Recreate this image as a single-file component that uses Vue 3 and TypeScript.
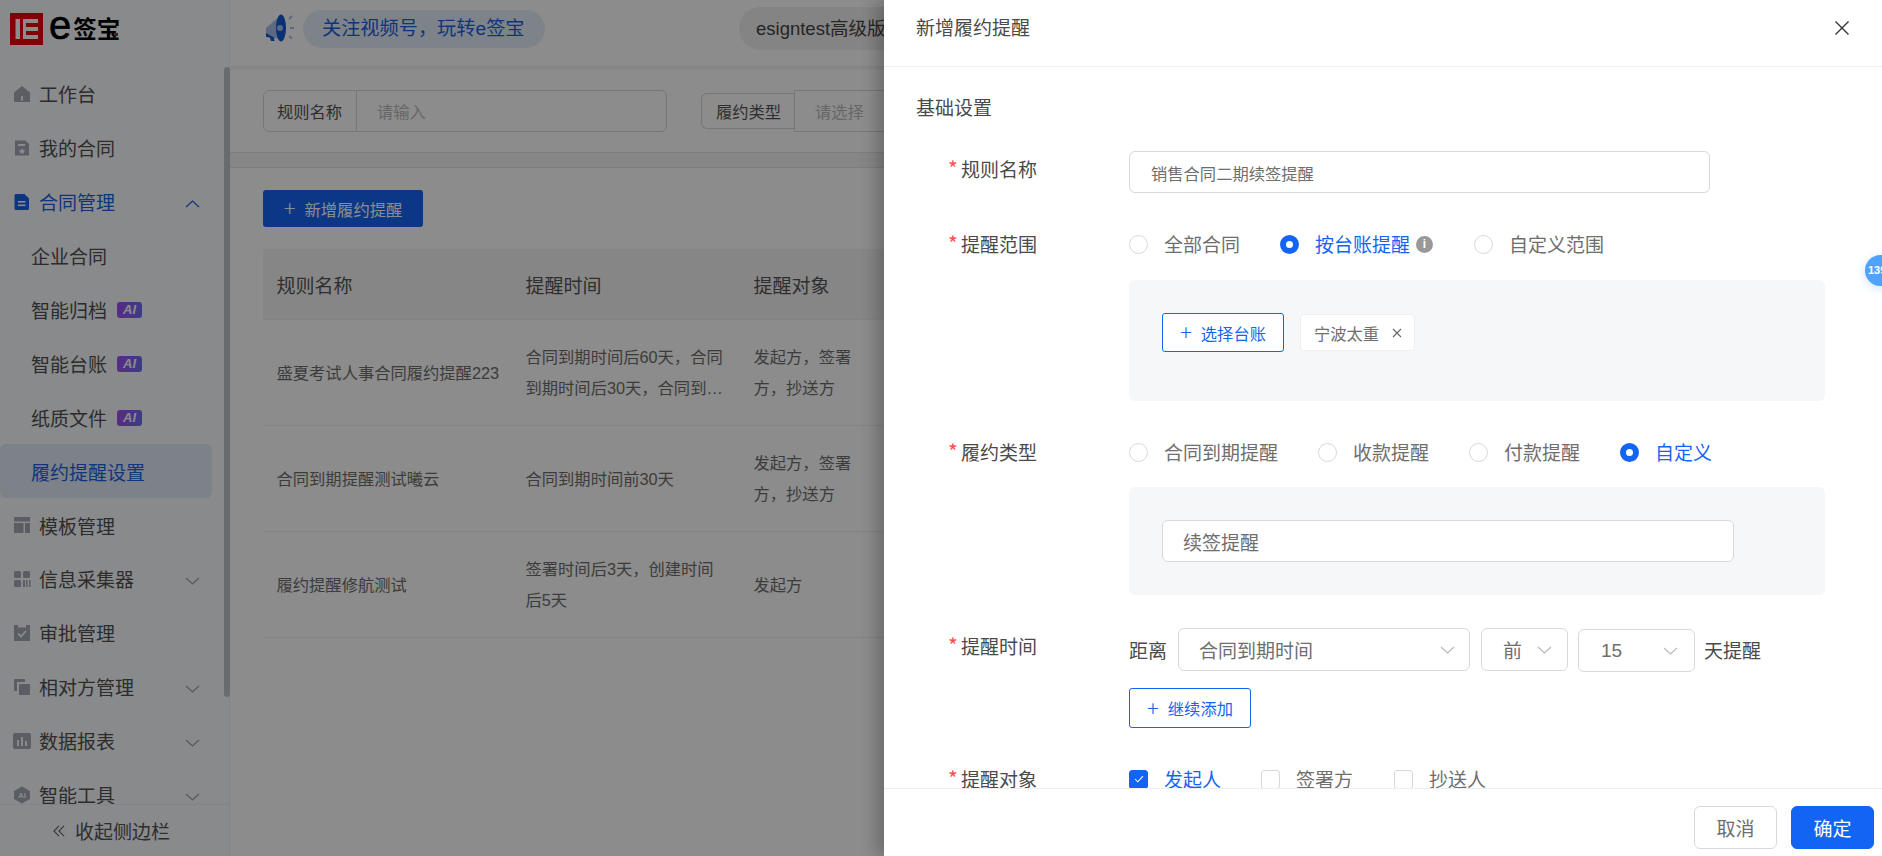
<script setup lang="ts">
interface NavItem {
  label: string
  icon?: string
  arrow?: 'up' | 'down'
  ai?: boolean
  sub?: boolean
  open?: boolean
  active?: boolean
}
const nav: NavItem[] = [
  { label: '工作台', icon: 'home' },
  { label: '我的合同', icon: 'mine' },
  { label: '合同管理', icon: 'doc', arrow: 'up', open: true },
  { label: '企业合同', sub: true },
  { label: '智能归档', sub: true, ai: true },
  { label: '智能台账', sub: true, ai: true },
  { label: '纸质文件', sub: true, ai: true },
  { label: '履约提醒设置', sub: true, active: true },
  { label: '模板管理', icon: 'tpl' },
  { label: '信息采集器', icon: 'grid', arrow: 'down' },
  { label: '审批管理', icon: 'check', },
  { label: '相对方管理', icon: 'copy', arrow: 'down' },
  { label: '数据报表', icon: 'chart', arrow: 'down' },
  { label: '智能工具', icon: 'ai', arrow: 'down' }
]
const rows = [
  { name: '盛夏考试人事合同履约提醒223', time: '合同到期时间后60天，合同到期时间后30天，合同到期时间后15天', target: '发起方，签署方，抄送方' },
  { name: '合同到期提醒测试曦云', time: '合同到期时间前30天', target: '发起方，签署方，抄送方' },
  { name: '履约提醒修航测试', time: '签署时间后3天，创建时间后5天', target: '发起方' }
]
const scopes = [
  { label: '全部合同', on: false },
  { label: '按台账提醒', on: true, info: true },
  { label: '自定义范围', on: false }
]
const kinds = [
  { label: '合同到期提醒', on: false },
  { label: '收款提醒', on: false },
  { label: '付款提醒', on: false },
  { label: '自定义', on: true }
]
const targets = [
  { label: '发起人', on: true },
  { label: '签署方', on: false },
  { label: '抄送人', on: false }
]
</script>

<template>
  <div class="page">
    <aside class="side">
      <div class="logo">
        <svg class="logo-mark" viewBox="0 0 33 32" width="33" height="32">
          <rect width="33" height="32" fill="#f00008" />
          <rect x="5.5" y="6" width="4.5" height="20" fill="#fff" />
          <rect x="13" y="6" width="3" height="20" fill="#fff" />
          <rect x="13" y="6" width="15" height="4" fill="#fff" />
          <rect x="13" y="14" width="15" height="4" fill="#fff" />
          <rect x="13" y="22" width="15" height="4" fill="#fff" />
        </svg>
        <span class="logo-e">e</span><span class="logo-cn">签宝</span>
        <i class="logo-dot"></i>
      </div>
      <nav class="nav">
        <div
          v-for="item in nav"
          :key="item.label"
          class="nav-item"
          :class="{ sub: item.sub, open: item.open, active: item.active }"
        >
          <svg v-if="item.icon" class="nav-ico" viewBox="0 0 18 18" width="18" height="18">
            <template v-if="item.icon === 'home'">
              <path d="M9 1 17 7.5V17H1V7.5Z" fill="currentColor" />
              <rect x="8" y="11" width="2" height="4.5" fill="#fafbfd" />
            </template>
            <template v-else-if="item.icon === 'mine'">
              <path d="M2 1.5h10.500L16 5v11.500H2Z" fill="currentColor" />
              <rect x="5" y="5" width="7" height="2" fill="#fafbfd" />
              <path d="m9 9 1 2.100 2.200.3-1.600 1.500.4 2.200-2-1.100-2 1.100.4-2.200-1.600-1.500 2.200-.3Z" fill="#fafbfd" />
            </template>
            <template v-else-if="item.icon === 'doc'">
              <path d="M3 1h8.500L16 5.500V15.500a1.500 1.500 0 0 1-1.500 1.500h-11.500A1.500 1.500 0 0 1 1.500 15.500V2.500A1.500 1.500 0 0 1 3 1Z" fill="currentColor" />
              <rect x="5" y="8" width="7.500" height="1.600" fill="#fff" />
              <rect x="5" y="11.500" width="7.500" height="1.600" fill="#fff" />
            </template>
            <template v-else-if="item.icon === 'tpl'">
              <rect x="1" y="1" width="16" height="4.500" fill="currentColor" />
              <rect x="1" y="7" width="9.500" height="10" fill="currentColor" />
              <rect x="12" y="7" width="5" height="10" fill="currentColor" />
            </template>
            <template v-else-if="item.icon === 'grid'">
              <rect x="1" y="1" width="7" height="7" rx="1.500" fill="currentColor" />
              <rect x="10" y="1" width="7" height="7" rx="1.500" fill="currentColor" />
              <rect x="1" y="10" width="7" height="7" rx="1.500" fill="currentColor" />
              <rect x="10" y="10" width="2" height="7" fill="currentColor" />
              <rect x="13" y="10" width="1.500" height="7" fill="currentColor" />
              <rect x="16" y="10" width="1.500" height="7" fill="currentColor" />
            </template>
            <template v-else-if="item.icon === 'check'">
              <path d="M1 1h4v2.500h8V1h4v16H1Z" fill="currentColor" />
              <path d="m5 9.500 3 3 5-5.500" fill="none" stroke="#fafbfd" stroke-width="1.800" />
            </template>
            <template v-else-if="item.icon === 'copy'">
              <path d="M1 2a1 1 0 0 1 1-1h10v3H4v9H1Z" fill="currentColor" />
              <rect x="6" y="6" width="11" height="11" rx="1" fill="currentColor" />
            </template>
            <template v-else-if="item.icon === 'chart'">
              <rect x="0" y="1" width="18" height="16" rx="2" fill="currentColor" />
              <rect x="4" y="8" width="2" height="6" fill="#fafbfd" />
              <rect x="8" y="5" width="2" height="9" fill="#fafbfd" />
              <rect x="12" y="9" width="2" height="5" fill="#fafbfd" />
            </template>
            <template v-else>
              <path d="M9 0.500 17 5v8l-8 4.500L1 13V5Z" fill="currentColor" />
              <text x="9" y="12" text-anchor="middle" class="ai-glyph">AI</text>
            </template>
          </svg>
          <span class="nav-text">{{ item.label }}</span>
          <span v-if="item.ai" class="ai-tag">AI</span>
          <svg v-if="item.arrow" class="nav-arrow" :class="{ up: item.arrow === 'up' }" viewBox="0 0 15 8" width="15" height="8">
            <path d="M1 1l6.500 6L14 1" fill="none" stroke="currentColor" stroke-width="1.200" />
          </svg>
        </div>
      </nav>
      <div class="collapse">
        <svg viewBox="0 0 13 13" width="12" height="12">
          <path d="M6.500 1 1 6.500 6.500 12M12 1 6.500 6.500 12 12" fill="none" stroke="currentColor" stroke-width="1.200" />
        </svg>
        <span>收起侧边栏</span>
      </div>
      <i class="thumb"></i>
    </aside>

    <main class="main">
      <header class="top">
        <svg class="horn" viewBox="0 0 30 30" width="30" height="30">
          <path d="M16 2 1 15v8l4 .8 1 4.200h3.500l-.8-3.500 7.300 2Z" fill="#a9c0ec" />
          <ellipse cx="16" cy="15" rx="5" ry="13.500" fill="#1259d6" />
          <circle cx="15" cy="15" r="3" fill="#a9c0ec" />
          <path d="M1 20v4l4 .6 1 3.400h3.500L9 24.500Z" fill="#1259d6" />
          <path d="m24 6 3-3M25 15h4M24 23l3 2.500" stroke="#a9c0ec" stroke-width="2" fill="none" />
        </svg>
        <div class="pill">关注视频号，玩转e签宝</div>
        <div class="org">esigntest高级版</div>
      </header>
      <section class="filters">
        <div class="field first">
          <span class="field-label">规则名称</span>
          <span class="field-value">请输入</span>
        </div>
        <div class="field-b">
          <span class="field-label-b">履约类型</span>
          <span class="field-value-b">请选择</span>
        </div>
      </section>
      <div class="band"></div>
      <section class="content">
        <button class="add" type="button"><span class="plus">+</span>新增履约提醒</button>
        <div class="table">
          <div class="thead">
            <div class="c1">规则名称</div>
            <div class="c2">提醒时间</div>
            <div class="c3">提醒对象</div>
          </div>
          <div v-for="r in rows" :key="r.name" class="trow">
            <div class="c1">{{ r.name }}</div>
            <div class="c2"><span class="clamp">{{ r.time }}</span></div>
            <div class="c3">{{ r.target }}</div>
          </div>
        </div>
      </section>
    </main>

    <div class="mask"></div>

    <aside class="drawer">
      <header class="d-head">
        <span>新增履约提醒</span>
        <svg viewBox="0 0 14 14" width="14" height="14">
          <path d="M.5.5l13 13M13.500.5l-13 13" stroke="#333" stroke-width="1.400" fill="none" />
        </svg>
      </header>
      <div class="d-body">
        <h3 class="sec">基础设置</h3>

        <div class="row r-name">
          <label class="lbl inset"><i>*</i>规则名称</label>
          <div class="ctl">
            <div class="input small">销售合同二期续签提醒</div>
          </div>
        </div>

        <div class="row r-gap">
          <label class="lbl"><i>*</i>提醒范围</label>
          <div class="ctl">
            <div class="opts scope">
              <span v-for="s in scopes" :key="s.label" class="opt" :class="{ on: s.on }">
                <b class="radio"></b>{{ s.label }}
                <em v-if="s.info" class="info">i</em>
              </span>
            </div>
            <div class="panel p1">
              <button class="ghost g1" type="button"><span class="plus">+</span>选择台账</button>
              <span class="tag">宁波太重<svg viewBox="0 0 10 10" width="10" height="10"><path d="M1 1l8 8M9 1 1 9" stroke="#666" stroke-width="1.100" /></svg></span>
            </div>
          </div>
        </div>

        <div class="row r-gap">
          <label class="lbl"><i>*</i>履约类型</label>
          <div class="ctl">
            <div class="opts kind">
              <span v-for="k in kinds" :key="k.label" class="opt" :class="{ on: k.on }">
                <b class="radio"></b>{{ k.label }}
              </span>
            </div>
            <div class="panel p2">
              <div class="input big">续签提醒</div>
            </div>
          </div>
        </div>

        <div class="row r-time">
          <label class="lbl inset2"><i>*</i>提醒时间</label>
          <div class="ctl">
            <div class="time">
              <span>距离</span>
              <div class="select s1">合同到期时间<svg viewBox="0 0 15 8" width="15" height="8"><path d="M1 1l6.500 6L14 1" fill="none" stroke="#bbb" stroke-width="1.200" /></svg></div>
              <div class="select s2">前<svg viewBox="0 0 15 8" width="15" height="8"><path d="M1 1l6.500 6L14 1" fill="none" stroke="#bbb" stroke-width="1.200" /></svg></div>
              <div class="select s3">15<svg viewBox="0 0 15 8" width="15" height="8"><path d="M1 1l6.500 6L14 1" fill="none" stroke="#bbb" stroke-width="1.200" /></svg></div>
              <span class="after">天提醒</span>
            </div>
            <button class="ghost g2" type="button"><span class="plus">+</span>继续添加</button>
          </div>
        </div>

        <div class="row r-gap">
          <label class="lbl"><i>*</i>提醒对象</label>
          <div class="ctl">
            <div class="opts target">
              <span v-for="t in targets" :key="t.label" class="opt" :class="{ on: t.on }">
                <b class="check">
                  <svg v-if="t.on" viewBox="0 0 12 10" width="10" height="8"><path d="M1 5l3.500 3.500L11 1.500" fill="none" stroke="#fff" stroke-width="1.300" /></svg>
                </b>{{ t.label }}
              </span>
            </div>
          </div>
        </div>
      </div>
      <footer class="d-foot">
        <button class="btn" type="button">取消</button>
        <button class="btn primary" type="button">确定</button>
      </footer>
      <div class="bubble">139</div>
    </aside>
  </div>
</template>

<style>
html, body { margin: 0; height: 100%; overflow: hidden; }
</style>

<style scoped>
.page {
  position: relative;
  display: flex;
  width: 100%;
  height: 856px;
  overflow: hidden;
  background: #fff;
  font-family: "Noto Sans CJK SC", "Liberation Sans", sans-serif;
  font-size: 16.3px;
  color: #6e6e6e;
}

/* sidebar */
.side {
  position: relative;
  flex: 0 0 230px;
  box-sizing: border-box;
  width: 231px;
  display: flex;
  flex-direction: column;
  background: #fafbfd;
  border-right: 1px solid #eceef1;
}
.logo {
  position: relative;
  flex: 0 0 67px;
  box-sizing: border-box;
  display: flex;
  align-items: flex-start;
  padding: 13px 0 0 10px;
  color: #000;
}
.logo-mark { flex: none; }
.logo-e {
  display: inline-block;
  margin: -4px 0 0 6px;
  font: 400 40px/32px "Liberation Sans", sans-serif;
  -webkit-text-stroke: .7px #000;
}
.logo-cn {
  margin: -1px 0 0 2px;
  font-size: 23.5px;
  line-height: 32px;
  font-weight: 700;
}
.logo-dot {
  position: absolute;
  left: 115px;
  top: 33px;
  width: 3px;
  height: 3px;
  background: #f00008;
}
.nav {
  flex: 1;
  min-height: 0;
  overflow: hidden;
}
.nav-item {
  position: relative;
  display: flex;
  align-items: center;
  box-sizing: border-box;
  height: 53.9px;
  width: 212px;
  padding-left: 13px;
  font-size: 19px;
  color: #505050;
  border-radius: 6px;
}
.nav-item.sub { padding-left: 31px; }
.nav-item.open { color: #1a5fe0; }
.nav-item.open .nav-ico { color: #1a62ea; }
.nav-item.active { color: #1a62ea; background: #e4ebf8; }
.nav-ico {
  flex: none;
  color: #a4aab6;
  margin-right: 8px;
}
.ai-glyph { font: 700 7.500px "Liberation Sans", sans-serif; fill: #fafbfd; }
.ai-tag {
  margin: 1px 0 0 10px;
  box-sizing: border-box;
  width: 25px;
  height: 16px;
  border-radius: 3px;
  background: linear-gradient(100deg, #a44df0, #6b6ff0);
  color: #fff;
  font: italic 700 13px/16px "Liberation Sans", sans-serif;
  text-align: center;
}
.nav-arrow {
  position: absolute;
  left: 185px;
  top: 25px;
  color: #9ba1ab;
}
.nav-arrow.up { transform: rotate(180deg); color: #1a62ea; }
.collapse {
  flex: 0 0 51px;
  display: flex;
  align-items: center;
  justify-content: center;
  gap: 10px;
  padding-right: 6px;
  border-top: 1px solid #eceef1;
  font-size: 19px;
  color: #555;
}
.collapse svg { color: #666; }
.thumb {
  position: absolute;
  right: -1px;
  top: 67px;
  width: 6px;
  height: 630px;
  border-radius: 3px;
  background: #c1c3c7;
}

/* main */
.main {
  flex: 1;
  min-width: 0;
  display: flex;
  flex-direction: column;
}
.top {
  flex: 0 0 67px;
  box-sizing: border-box;
  display: flex;
  align-items: center;
  padding-left: 35px;
  border-bottom: 1px solid #eee;
  box-shadow: 0 2px 3px rgba(0, 0, 0, .06);
}
.horn { flex: none; margin: -10px 8px 0 0; }
.pill {
  margin-top: -9px;
  flex: none;
  box-sizing: border-box;
  width: 242px;
  height: 38px;
  line-height: 38px;
  padding-left: 19px;
  border-radius: 19px;
  background: #e6eefb;
  color: #1a5fe0;
  font-family: "Liberation Sans", "Noto Sans CJK SC", sans-serif;
  font-size: 19.2px;
  white-space: nowrap;
}
.org {
  margin: -9px 0 0 194px;
  flex: none;
  box-sizing: border-box;
  width: 300px;
  height: 43px;
  line-height: 43px;
  padding-left: 17px;
  border-radius: 22px;
  background: #f0f0f0;
  color: #444;
  font-family: "Liberation Sans", "Noto Sans CJK SC", sans-serif;
  font-size: 18.5px;
  white-space: nowrap;
}
.filters {
  flex: 0 0 85px;
  box-sizing: border-box;
  display: flex;
  align-items: center;
  gap: 34px;
  padding: 3px 0 0 33px;
}
.field {
  flex: none;
  box-sizing: border-box;
  width: 404px;
  height: 42px;
  display: flex;
  border: 1px solid #d9d9d9;
  border-radius: 6px;
  line-height: 40px;
}
.field-label {
  flex: 0 0 93px;
  box-sizing: border-box;
  padding-left: 13px;
  border-right: 1px solid #d9d9d9;
  color: #555;
}
.field-value { padding-left: 20px; color: #bbb; }
.field-b { flex: none; display: flex; align-items: center; }
.field-label-b {
  box-sizing: border-box;
  width: 93px;
  height: 36px;
  line-height: 34px;
  padding-left: 14px;
  border: 1px solid #d9d9d9;
  border-right: 0;
  border-radius: 6px 0 0 6px;
  color: #555;
}
.field-value-b {
  box-sizing: border-box;
  width: 260px;
  height: 42px;
  line-height: 40px;
  padding-left: 20px;
  border: 1px solid #d9d9d9;
  color: #bbb;
}
.band {
  flex: 0 0 16px;
  box-sizing: border-box;
  background: #f5f5f5;
  border-top: 1px solid #e4e4e4;
  border-bottom: 1px solid #e4e4e4;
}
.content { flex: 1; padding: 22px 0 0 33px; }
.add {
  display: flex;
  align-items: center;
  justify-content: center;
  width: 160px;
  height: 37px;
  padding: 0;
  border: 0;
  border-radius: 3px;
  background: #1464f4;
  color: #fff;
  font: inherit;
}
.plus {
  font-size: 22px;
  line-height: 1;
  font-weight: 300;
  margin-right: 9px;
  margin-top: -3px;
}
.table { margin-top: 22px; width: 1400px; }
.thead, .trow {
  display: grid;
  grid-template-columns: 249px 228px 125px 1fr;
  align-items: center;
  border-bottom: 1px solid #eee;
}
.thead {
  height: 71px;
  box-sizing: border-box;
  background: #f5f5f5;
  font-size: 19px;
  color: #555;
}
.trow {
  height: 106px;
  box-sizing: border-box;
  padding-top: 1px;
  line-height: 30.6px;
  font-family: "Liberation Sans", "Noto Sans CJK SC", sans-serif;
}
.c1, .c2, .c3 { padding: 0 13.5px; }
.c1 { white-space: nowrap; }
.clamp {
  display: -webkit-box;
  -webkit-box-orient: vertical;
  -webkit-line-clamp: 2;
  overflow: hidden;
}
.mask {
  position: absolute;
  inset: 0;
  background: rgba(0, 0, 0, .45);
}

/* drawer */
.drawer {
  position: absolute;
  top: 0;
  right: 0;
  bottom: 0;
  width: 998px;
  display: flex;
  flex-direction: column;
  background: #fff;
  box-shadow: -8px 0 14px rgba(0, 0, 0, .22);
  font-size: 19px;
}
.d-head {
  flex: 0 0 67px;
  box-sizing: border-box;
  display: flex;
  justify-content: space-between;
  padding: 13px 33px 0 32px;
  border-bottom: 1px solid #f0f0f0;
  color: #4a4a4a;
  line-height: 28px;
}
.d-head svg { margin-top: 8px; }
.d-body {
  flex: 1;
  min-height: 0;
  overflow: hidden;
  padding: 28px 0 0 65px;
}
.sec {
  margin: 0 0 32px -33px;
  font-size: 19px;
  line-height: 24px;
  font-weight: 400;
  color: #4a4a4a;
}
.row { display: flex; }
.r-gap { margin-top: 39px; }
.r-time { margin-top: 33px; }
.lbl {
  flex: 0 0 180px;
  display: block;
  line-height: 24px;
  color: #4a4a4a;
  white-space: nowrap;
}
.lbl i {
  display: inline-block;
  width: 12px;
  margin-left: -1px;
  margin-right: 1px;
  color: #ff4d4f;
  font-style: normal;
  font-size: 21px;
  line-height: 18px;
}
.lbl.inset { padding-top: 6px; }
.lbl.inset2 { padding-top: 6px; }
.ctl { width: 696px; }
.input {
  box-sizing: border-box;
  height: 42px;
  border: 1px solid #d9d9d9;
  border-radius: 6px;
  background: #fff;
  color: #6e6e6e;
  white-space: nowrap;
}
.input.small {
  width: 581px;
  padding-left: 21px;
  font-size: 16.3px;
  line-height: 42px;
}
.input.big {
  width: 572px;
  padding-left: 20px;
  font-size: 19px;
  line-height: 42px;
}
.opts { display: flex; height: 24px; align-items: center; }
.opt {
  display: inline-flex;
  align-items: center;
  line-height: 24px;
  color: #6e6e6e;
  white-space: nowrap;
}
.opt.on { color: #1464f4; }
.scope .opt:nth-child(1) { margin-right: 40px; }
.scope .opt:nth-child(2) { margin-right: 41px; }
.kind .opt:nth-child(1) { margin-right: 40px; }
.kind .opt:nth-child(2) { margin-right: 40px; }
.kind .opt:nth-child(3) { margin-right: 40px; }
.target .opt:nth-child(1) { margin-right: 40px; }
.target .opt:nth-child(2) { margin-right: 41px; }
.radio {
  flex: none;
  box-sizing: border-box;
  width: 19px;
  height: 19px;
  margin-right: 16px;
  border: 1px solid #d9d9d9;
  border-radius: 50%;
  background: #fff;
}
.opt.on .radio { border: 6.5px solid #1464f4; }
.check {
  flex: none;
  box-sizing: border-box;
  width: 19px;
  height: 19px;
  margin-right: 16px;
  border: 1px solid #d9d9d9;
  border-radius: 3px;
  display: flex;
  align-items: center;
  justify-content: center;
}
.opt.on .check { background: #1464f4; border-color: #1464f4; }
.info {
  width: 17px;
  height: 17px;
  margin-left: 6px;
  border-radius: 50%;
  background: #999;
  color: #fff;
  font: 700 12px/17px "Liberation Sans", sans-serif;
  text-align: center;
}
.panel {
  box-sizing: border-box;
  border-radius: 6px;
  background: #f6f7f9;
  margin-top: 24px;
  padding-left: 33px;
  display: flex;
}
.p1 { height: 121px; padding-top: 33px; gap: 16px; }
.p2 { height: 108px; padding-top: 33px; margin-top: 23px; }
.ghost {
  display: flex;
  align-items: center;
  justify-content: center;
  box-sizing: border-box;
  border: 1px solid #1464f4;
  border-radius: 3px;
  background: #fff;
  color: #1464f4;
  font: inherit;
  font-size: 16.3px;
  padding: 0;
}
.g1 { width: 122px; height: 39px; }
.g2 { width: 122px; height: 40px; margin-top: 17px; }
.tag {
  display: flex;
  align-items: center;
  gap: 13px;
  box-sizing: border-box;
  width: 115px;
  height: 37px;
  margin-top: 1px;
  padding-left: 13px;
  border: 1px solid #eee;
  border-radius: 4px;
  background: #fff;
  font-size: 16.3px;
  color: #6e6e6e;
}
.time {
  display: flex;
  align-items: center;
  height: 43px;
  color: #4a4a4a;
}
.select {
  position: relative;
  box-sizing: border-box;
  height: 43px;
  line-height: 41px;
  border: 1px solid #d9d9d9;
  border-radius: 6px;
  color: #6e6e6e;
  white-space: nowrap;
}
.select svg { position: absolute; top: 17px; }
.s1 { width: 292px; margin-left: 11px; padding-left: 20px; }
.s1 svg { left: 261px; }
.s2 { width: 87px; margin-left: 11px; padding-left: 21px; }
.s2 svg { left: 55px; }
.s3 {
  width: 117px;
  margin: 1px 0 0 10px;
  padding-left: 22px;
  font-family: "Liberation Sans", sans-serif;
}
.s3 svg { left: 84px; }
.after { margin-left: 9px; }
.d-foot {
  flex: 0 0 68px;
  box-sizing: border-box;
  display: flex;
  justify-content: flex-end;
  gap: 14px;
  padding: 17px 8px 0 0;
  border-top: 1px solid #eee;
}
.btn {
  box-sizing: border-box;
  width: 83px;
  height: 43px;
  border: 1px solid #d9d9d9;
  border-radius: 6px;
  background: #fff;
  color: #6e6e6e;
  font: inherit;
  font-size: 19px;
  padding: 0;
}
.btn.primary { border-color: #1464f4; background: #1464f4; color: #fff; }
.bubble {
  position: absolute;
  left: 981px;
  top: 255px;
  width: 40px;
  height: 31px;
  padding-left: 3px;
  box-sizing: border-box;
  border-radius: 16px;
  background: #4fa3ff;
  box-shadow: 0 2px 10px rgba(79, 163, 255, .3);
  color: #fff;
  font: 700 11px/31px "Liberation Sans", sans-serif;
}
</style>
